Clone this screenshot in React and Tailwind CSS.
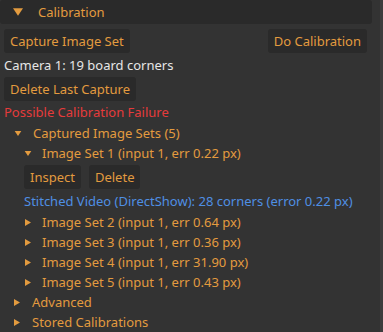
import React from "react";

const font = { fontFamily: "'Noto Sans', 'Open Sans', sans-serif" };

function Down({ className }) {
  return (
    <svg viewBox="0 0 8 6" className={className}>
      <path d="M0 0 L8 0 L4 6 Z" fill="currentColor" />
    </svg>
  );
}

function Right({ className }) {
  return (
    <svg viewBox="0 0 6 7" className={className}>
      <path d="M0 0 L6 3.5 L0 7 Z" fill="currentColor" />
    </svg>
  );
}

function Button({ children, className = "" }) {
  return (
    <div
      className={
        "h-[24px] flex items-center px-[6px] rounded-[3px] bg-[#2a2a2a] text-[#e39b3f] " +
        className
      }
    >
      {children}
    </div>
  );
}

function TreeRow({ open, indent, textX, children, className = "" }) {
  return (
    <div className={"h-[20px] flex items-center text-[#e39b3f] " + className}>
      <div style={{ width: indent }} className="shrink-0" />
      {open ? (
        <Down className="w-[8px] h-[5px] shrink-0" />
      ) : (
        <Right className="w-[6px] h-[7px] shrink-0" />
      )}
      <div style={{ width: textX - indent - (open ? 8 : 6) }} className="shrink-0" />
      <span>{children}</span>
    </div>
  );
}

export default function App() {
  const sets = [
    ["2", "0.64"],
    ["3", "0.36"],
    ["4", "31.90"],
    ["5", "0.43"],
  ];
  return (
    <div
      style={font}
      className="w-[383px] h-[332px] bg-[#333333] flex overflow-hidden text-[13px] leading-none"
    >
      <div className="w-[372px] flex flex-col">
        <div className="h-[24px] flex items-center bg-[#2a2a2a] rounded-[3px] text-[#e39b3f]">
          <div className="w-[13px]" />
          <Down className="w-[10px] h-[8px]" />
          <div className="w-[15px]" />
          <span>Calibration</span>
        </div>

        <div className="mt-[5px] flex justify-between pl-[4px] pr-[5px]">
          <Button>Capture Image Set</Button>
          <Button>Do Calibration</Button>
        </div>

        <div className="h-[24px] flex items-center pl-[4px] text-[#e6e6e6]">
          Camera 1: 19 board corners
        </div>

        <div className="flex pl-[4px]">
          <Button>Delete Last Capture</Button>
        </div>

        <div className="h-[22px] flex items-center pl-[4px] text-[#e53b3b]">
          Possible Calibration Failure
        </div>

        <TreeRow open indent={14} textX={33}>
          Captured Image Sets (5)
        </TreeRow>
        <TreeRow open indent={24} textX={42}>
          Image Set 1 (input 1, err 0.22 px)
        </TreeRow>

        <div className="mt-[2px] flex gap-[8px] pl-[24px]">
          <Button className="h-[23px]">Inspect</Button>
          <Button className="h-[23px]">Delete</Button>
        </div>

        <div className="h-[22px] mt-[1px] flex items-center pl-[24px] text-[#4f8fe3]">
          Stitched Video (DirectShow): 28 corners (error 0.22 px)
        </div>

        {sets.map(([n, err]) => (
          <TreeRow key={n} indent={25} textX={42}>
            Image Set {n} (input 1, err {err} px)
          </TreeRow>
        ))}

        <TreeRow indent={14} textX={32}>
          Advanced
        </TreeRow>
        <TreeRow indent={14} textX={32}>
          Stored Calibrations
        </TreeRow>
      </div>
      <div className="w-[8px]" />
      <div className="w-[3px] bg-[#3c3c3c]" />
    </div>
  );
}
